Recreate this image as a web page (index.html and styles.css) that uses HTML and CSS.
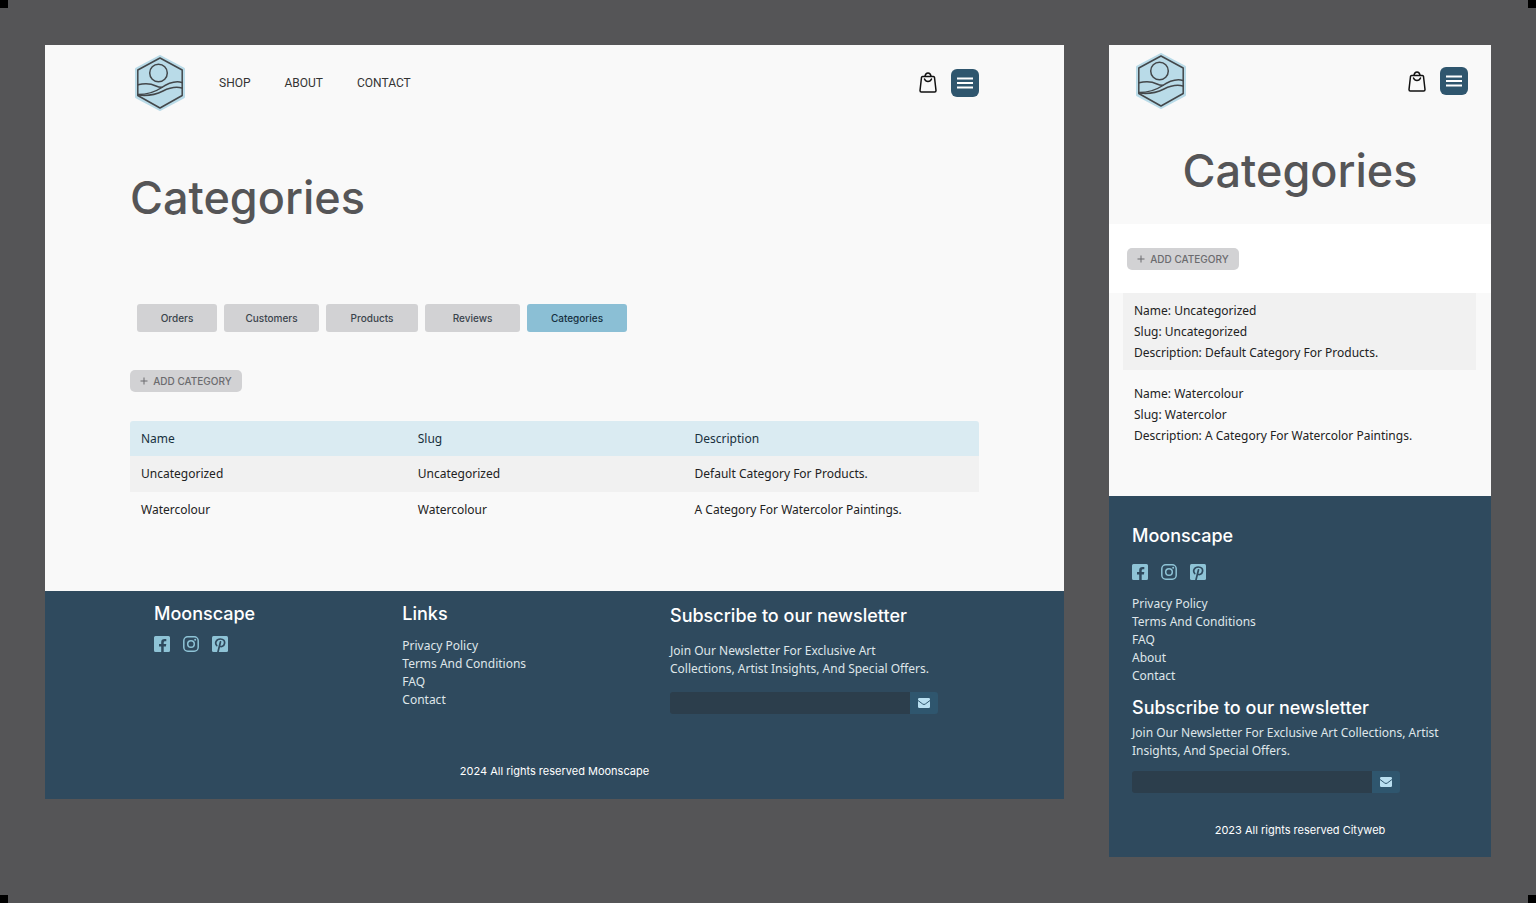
FILE: index.html
```html
<!DOCTYPE html>
<html lang="en">
<head>
<meta charset="utf-8">
<title>Moonscape – Categories</title>
<link rel="stylesheet" href="styles.css">
</head>
<body>
<svg class="sprite" aria-hidden="true">
  <symbol id="logo" viewBox="0 0 50 56">
    <path d="M25 1.500 48.500 14V42L25 54.500 1.500 42V14Z" fill="#b9dbe8" stroke="#b9dbe8" stroke-width="3" stroke-linejoin="round"/>
    <g fill="none" stroke="#43474a" stroke-width="1.500" stroke-linejoin="round" stroke-linecap="round">
      <path d="M25 3 47.200 15V40.500L25 53 2.800 40.500V15Z"/>
      <circle cx="23.500" cy="18" r="8.800"/>
      <path d="M3 29.800C10 28 17 29 21 31 23 32 25 32.500 27 32.300"/>
      <path d="M3 39.500C12 39.500 20 37 26 33 34 27.500 40 25.500 47 27.500"/>
      <path d="M3 40C14 41.500 21 39.500 28 36 35 32.500 41 31.500 47 33"/>
    </g>
  </symbol>
  <symbol id="bag" viewBox="0 0 18 21">
    <g fill="none" stroke="#111" stroke-width="1.500" stroke-linejoin="round" stroke-linecap="round">
      <path d="M3.500 4.500H14.500Q15.300 4.500 15.500 5.500L17 18.500Q17 20 15.700 20H2.300Q1 20 1 18.500L2.500 5.500Q2.700 4.500 3.500 4.500Z"/>
      <path d="M6 4.200Q6.500 1 9 1T12 4.200M5.500 7Q6.500 9.500 9 9.500T12.500 7"/>
    </g>
  </symbol>
  <symbol id="menu" viewBox="0 0 16 12"><path d="M0 1.500H16M0 6H16M0 10.500H16" stroke="#fff" stroke-width="2"/></symbol>
  <symbol id="facebook" viewBox="0 0 16 16"><path fill-rule="evenodd" d="M1.500 0H14.500A1.500 1.500 0 0 1 16 1.500V14.500A1.500 1.500 0 0 1 14.500 16H9.700V10.400H11.900L12.300 8H9.700V6.500Q9.700 5.200 11 5.200H12.300V3.100Q11.500 3 10.500 3 7.200 3 7.200 6.200V8H5V10.400H7.200V16H1.500A1.500 1.500 0 0 1 0 14.500V1.500A1.500 1.500 0 0 1 1.500 0Z" fill="#8ec3d6"/></symbol>
  <symbol id="instagram" viewBox="0 0 16 16"><g fill="none" stroke="#8ec3d6" stroke-width="1.500"><rect x=".8" y=".8" width="14.400" height="14.400" rx="4"/><circle cx="8" cy="8" r="3.300"/></g><circle cx="12.200" cy="3.800" r="1" fill="#8ec3d6"/></symbol>
  <symbol id="pinterest" viewBox="0 0 16 16"><rect width="16" height="16" rx="1.500" fill="#8ec3d6"/><path d="M4.700 9.500C2.500 7 4.200 3 8.300 3 11.500 3 13 5 12.500 7.500 12 10.300 9 11.500 7.500 9.800M8.500 5.800 6 15.800" fill="none" stroke="#2f4a5e" stroke-width="1.700" stroke-linecap="round"/></symbol>
  <symbol id="mail" viewBox="0 0 12 10"><rect width="12" height="10" rx="1.200" fill="#b9dff0"/><path d="M0 2.500 4.700 6Q6 7 7.300 6L12 2.500" fill="none" stroke="#2f566e" stroke-width="1"/></symbol>
  <symbol id="plus" viewBox="0 0 8 8"><path d="M4 .5V7.500M.5 4H7.500" stroke="#6b6b6e" stroke-width="1"/></symbol>
</svg>

<main class="canvas">
  <section class="board board-desktop">
    <header class="topbar">
      <a class="brand" href="#" aria-label="Moonscape"><svg class="logo"><use href="#logo"/></svg></a>
      <nav class="nav"><a href="#">SHOP</a><a href="#">ABOUT</a><a href="#">CONTACT</a></nav>
      <div class="actions">
        <button class="icon-button" aria-label="Bag"><svg class="bag"><use href="#bag"/></svg></button>
        <button class="menu-button" aria-label="Menu"><svg class="menu"><use href="#menu"/></svg></button>
      </div>
    </header>
    <div class="content">
      <h1 class="title">Categories</h1>
      <nav class="tabs">
        <button class="tab">Orders</button>
        <button class="tab">Customers</button>
        <button class="tab">Products</button>
        <button class="tab">Reviews</button>
        <button class="tab tab-active">Categories</button>
      </nav>
      <button class="add"><svg class="plus"><use href="#plus"/></svg>ADD CATEGORY</button>
      <table class="table">
        <thead><tr><th>Name</th><th>Slug</th><th>Description</th></tr></thead>
        <tbody>
          <tr><td>Uncategorized</td><td>Uncategorized</td><td>Default Category For Products.</td></tr>
          <tr><td>Watercolour</td><td>Watercolour</td><td>A Category For Watercolor Paintings.</td></tr>
        </tbody>
      </table>
    </div>
    <footer class="footer">
      <div class="footer-columns">
        <div>
          <h2 class="heading">Moonscape</h2>
          <div class="social">
            <a href="#" aria-label="Facebook"><svg><use href="#facebook"/></svg></a>
            <a href="#" aria-label="Instagram"><svg><use href="#instagram"/></svg></a>
            <a href="#" aria-label="Pinterest"><svg><use href="#pinterest"/></svg></a>
          </div>
        </div>
        <div>
          <h2 class="heading">Links</h2>
          <ul class="links"><li><a href="#">Privacy Policy</a></li><li><a href="#">Terms And Conditions</a></li><li><a href="#">FAQ</a></li><li><a href="#">Contact</a></li></ul>
        </div>
        <div class="newsletter">
          <h2 class="heading">Subscribe to our newsletter</h2>
          <p class="blurb">Join Our Newsletter For Exclusive Art<br>Collections, Artist Insights, And Special Offers.</p>
          <form class="signup"><input type="email" aria-label="Email address"><button type="button" aria-label="Subscribe"><svg><use href="#mail"/></svg></button></form>
        </div>
      </div>
      <p class="copyright">2024 All rights reserved Moonscape</p>
    </footer>
  </section>

  <section class="board board-mobile">
    <header class="topbar">
      <a class="brand" href="#" aria-label="Moonscape"><svg class="logo"><use href="#logo"/></svg></a>
      <div class="actions">
        <button class="icon-button" aria-label="Bag"><svg class="bag"><use href="#bag"/></svg></button>
        <button class="menu-button" aria-label="Menu"><svg class="menu"><use href="#menu"/></svg></button>
      </div>
    </header>
    <h1 class="title">Categories</h1>
    <div class="add-strip"><button class="add"><svg class="plus"><use href="#plus"/></svg>ADD CATEGORY</button></div>
    <ul class="cards">
      <li class="card card-shaded"><p>Name: Uncategorized</p><p>Slug: Uncategorized</p><p>Description: Default Category For Products.</p></li>
      <li class="card"><p>Name: Watercolour</p><p>Slug: Watercolor</p><p>Description: A Category For Watercolor Paintings.</p></li>
    </ul>
    <footer class="footer">
      <h2 class="heading">Moonscape</h2>
      <div class="social">
        <a href="#" aria-label="Facebook"><svg><use href="#facebook"/></svg></a>
        <a href="#" aria-label="Instagram"><svg><use href="#instagram"/></svg></a>
        <a href="#" aria-label="Pinterest"><svg><use href="#pinterest"/></svg></a>
      </div>
      <ul class="links"><li><a href="#">Privacy Policy</a></li><li><a href="#">Terms And Conditions</a></li><li><a href="#">FAQ</a></li><li><a href="#">About</a></li><li><a href="#">Contact</a></li></ul>
      <h2 class="heading">Subscribe to our newsletter</h2>
      <p class="blurb">Join Our Newsletter For Exclusive Art Collections, Artist Insights, And Special Offers.</p>
      <form class="signup"><input type="email" aria-label="Email address"><button type="button" aria-label="Subscribe"><svg><use href="#mail"/></svg></button></form>
      <p class="copyright">2023 All rights reserved Cityweb</p>
    </footer>
  </section>
</main>
</body>
</html>
```
FILE: styles.css
```css
* { box-sizing: border-box; margin: 0; padding: 0; }
body {
  min-height: 100vh;
  font: 12px/18px "Noto Sans", sans-serif;
  color: #222;
  background:
    linear-gradient(#000, #000) top left / 8px 8px no-repeat,
    linear-gradient(#000, #000) top right / 8px 8px no-repeat,
    linear-gradient(#000, #000) bottom left / 8px 8px no-repeat,
    linear-gradient(#000, #000) bottom right / 8px 8px no-repeat,
    #555557;
}
a { color: inherit; text-decoration: none; }
button { border: 0; font: inherit; cursor: pointer; }
ul { list-style: none; }
svg { display: block; }
.sprite { display: none; }

.canvas { display: flex; align-items: flex-start; gap: 45px; padding: 45px; }
.board { background: #f9f9f9; min-width: 0; }
.board-desktop { flex: 1019 1 0; }
.board-mobile { flex: 382 1 0; }

.topbar { display: flex; align-items: center; height: 75px; padding: 0 85px 0 90px; }
.logo { width: 50px; height: 56px; }
.nav { display: flex; gap: 34px; margin-left: 34px; font: 12px/16px Roboto, sans-serif; color: #333; }
.actions { display: flex; align-items: center; gap: 14px; margin-left: auto; }
.icon-button { background: none; }
.bag { width: 18px; height: 21px; }
.menu-button { display: grid; place-items: center; width: 28px; height: 28px; border-radius: 6px; background: #2f566e; }
.menu { width: 16px; height: 12px; }

.content { padding: 50px 85px 63px; }
.title { font: 500 45px/56px Inter, sans-serif; color: #555557; }
.tabs { display: grid; grid-template-columns: 80px 95px 92px 95px 100px; gap: 7px; margin: 78px 0 38px 7px; }
.tab { height: 28px; border-radius: 3px; background: #d2d2d4; color: #3b444c; font: 500 10px/16px Inter, sans-serif; }
.tab-active { background: #8bbfd5; color: #16303f; }
.add { display: flex; align-items: center; justify-content: center; gap: 5px; width: 112px; height: 22px; border-radius: 5px; background: #d2d2d4; color: #6b6b6e; font: 500 10px/16px Inter, sans-serif; }
.plus { width: 8px; height: 8px; }
.table { width: 100%; margin-top: 29px; border-collapse: collapse; table-layout: fixed; }
.table th, .table td { padding: 0 11px; text-align: left; font-weight: 400; }
.table th { height: 35px; background: #daebf2; color: #17303d; }
.table td { height: 36px; }
.table th:first-child { border-top-left-radius: 3px; }
.table th:last-child { border-top-right-radius: 3px; }
.table th:nth-child(-n+2) { width: 32.6%; }
.table tbody tr:first-child { background: #f1f1f1; }

.footer { background: #2f4a5e; color: #dfe6ea; }
.heading { font: 500 18px/26px Inter, sans-serif; color: #fff; }
.social { display: flex; gap: 13px; }
.social svg { width: 16px; height: 16px; }
.signup { display: flex; }
.signup input { width: 240px; height: 22px; padding: 0 8px; border: 0; border-radius: 3px 0 0 3px; background: #2c3e4c; color: #fff; font: inherit; }
.signup button { display: grid; place-items: center; width: 28px; background: #2f566e; border-radius: 0 3px 3px 0; }
.signup svg { width: 12px; height: 10px; }
.copyright { text-align: center; color: #fff; font: 11px/16px Inter, sans-serif; }

.board-desktop .footer { padding: 10px 109px 20px; }
.footer-columns { display: grid; grid-template-columns: 31% 1fr 285px; min-height: 115px; margin-bottom: 47px; }
.board-desktop .social { margin-top: 9px; }
.board-desktop .links { margin-top: 10px; }
.newsletter { padding-top: 2px; }
.newsletter .blurb { margin: 13px 0 14px; white-space: nowrap; }

.board-mobile .topbar { height: 72px; padding: 0 23px 0 27px; }
.board-mobile .title { margin: 26px 0 25px; text-align: center; }
.add-strip { padding: 24px 18px 23px; background: #fff; }
.cards { display: grid; gap: 6px; padding: 0 15px 43px 14px; }
.card { padding: 7px 11px; line-height: 21px; }
.card-shaded { background: #f1f1f1; }
.board-mobile .footer { padding: 27px 23px 19px; }
.board-mobile .social { margin: 15px 0; }
.board-mobile .links { margin-bottom: 10px; }
.board-mobile .blurb { margin: 3px 0 11px; }
.board-mobile .copyright { margin-top: 29px; }
```
